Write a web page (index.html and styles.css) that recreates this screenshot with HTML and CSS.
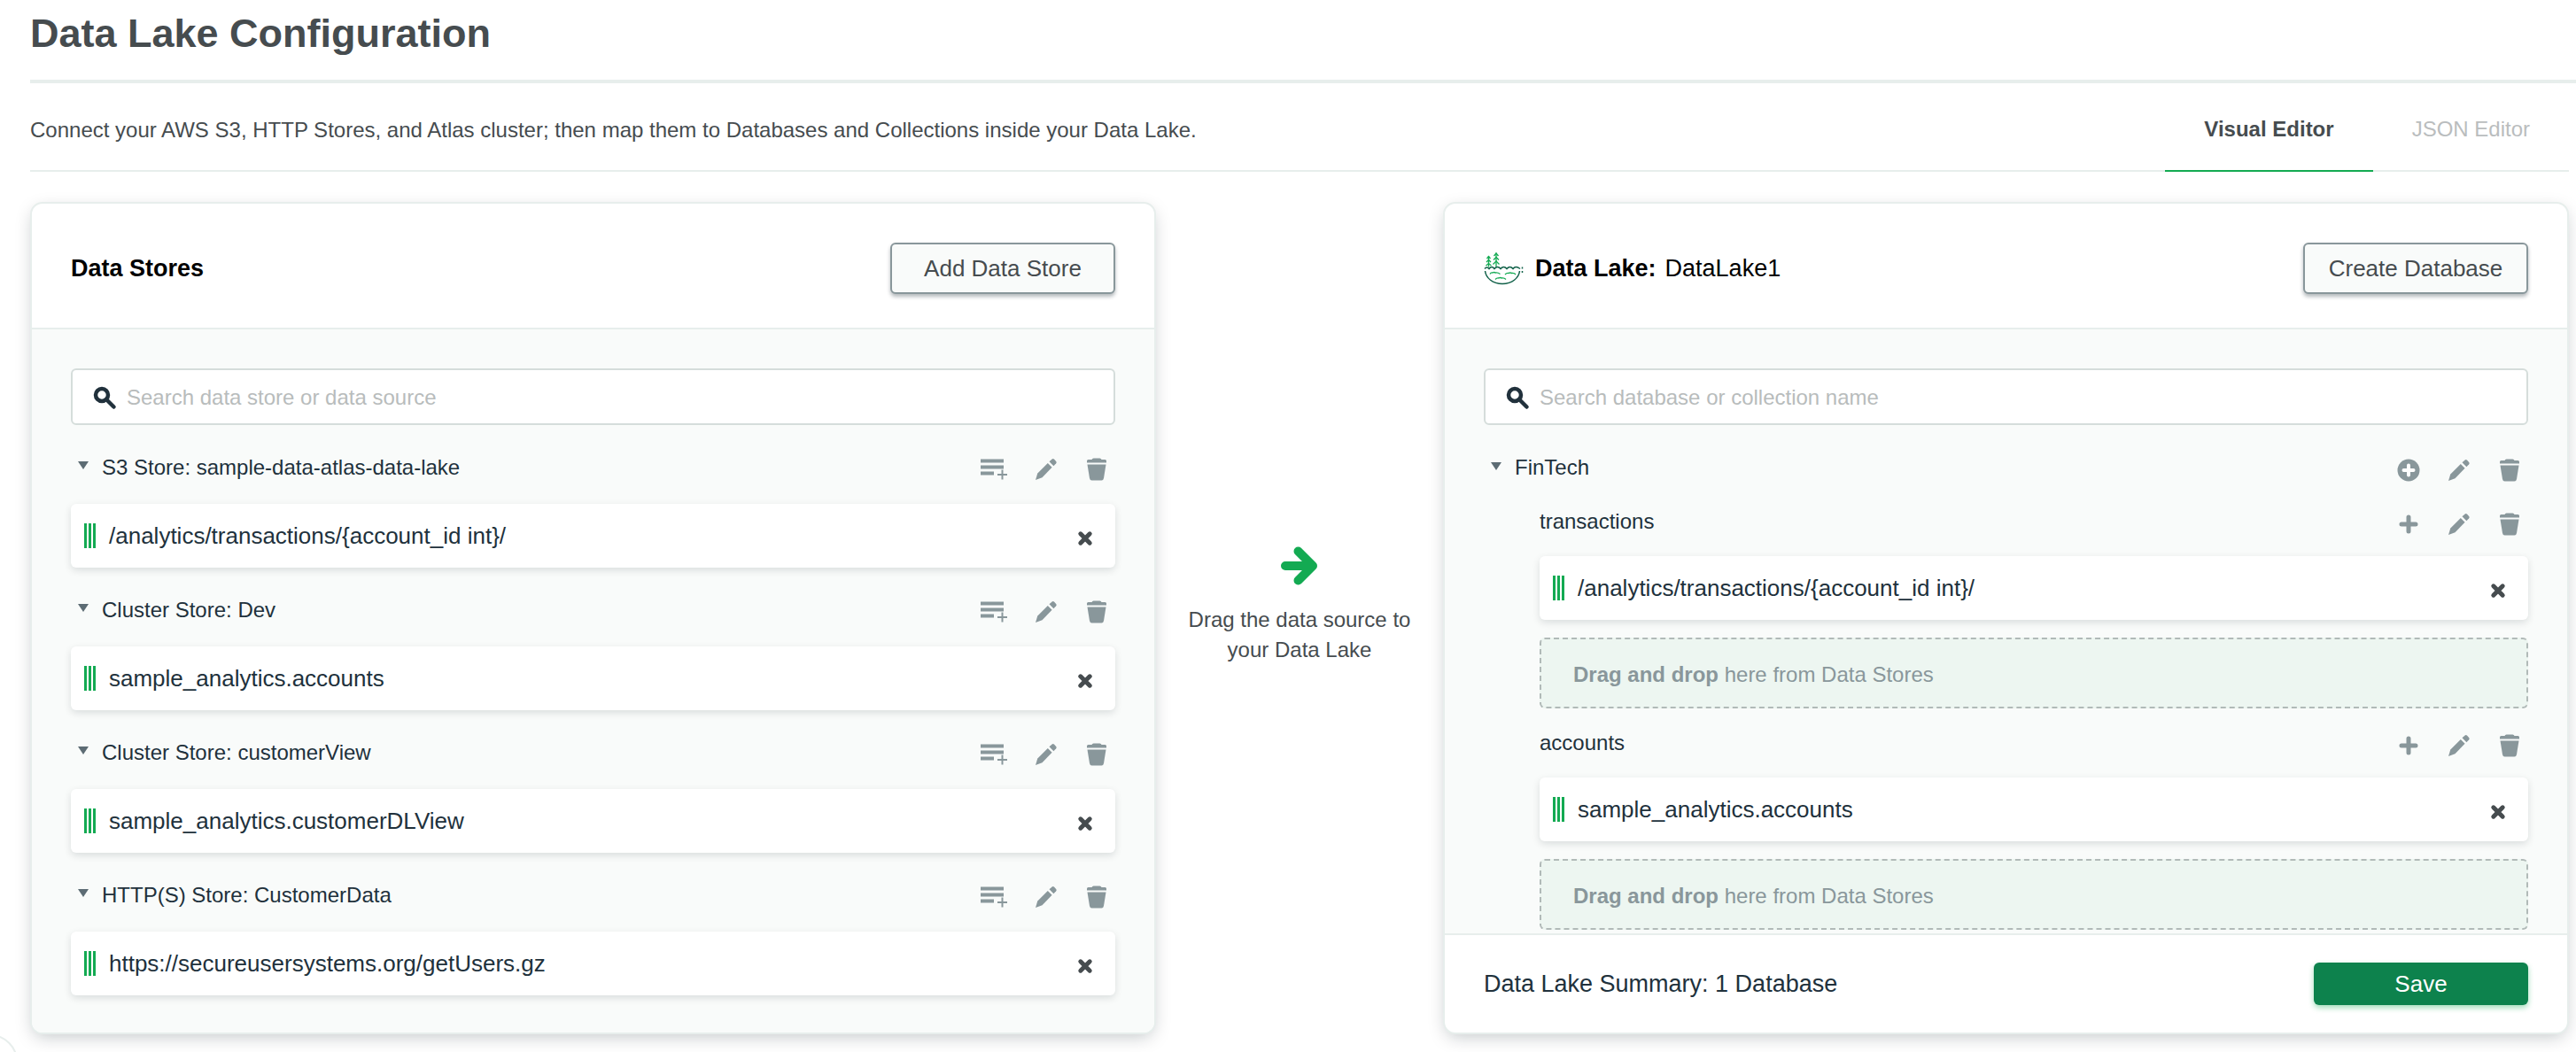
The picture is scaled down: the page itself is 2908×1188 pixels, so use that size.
FILE: index.html
```html
<!DOCTYPE html>
<html lang="en">
<head>
    <meta charset="UTF-8">
    <meta name="viewport" content="width=device-width, initial-scale=1.0">
    <title>Data Lake Configuration</title>
    <link rel="stylesheet" href="styles.css">
</head>
<body>
    <!-- icon sprite -->
    <svg class="sprite" aria-hidden="true">
        <symbol id="icon-search" viewBox="0 0 28 28">
            <circle cx="11" cy="11" r="7" fill="none" stroke="currentColor" stroke-width="4.500"/>
            <path d="M16 16l8.500 8.500" stroke="currentColor" stroke-width="4.500" stroke-linecap="round"/>
        </symbol>
        <symbol id="icon-list" viewBox="0 0 32 28">
            <path d="M1 4.500h26M1 11.500h26M1 18.500h15" stroke="currentColor" stroke-width="4"/>
            <path d="M20 20h11M25.500 14.500v11" stroke="currentColor" stroke-width="2"/>
        </symbol>
        <symbol id="icon-edit" viewBox="0 0 28 28">
            <path d="M2 26l2.300-7.500L15.800 7l4.800 4.800L9.500 23.300z" fill="currentColor"/>
            <path d="M17.500 5.300L20.600 2.500q1.200-.9 2.300.1l2.300 2.300q1 1.200 0 2.300l-2.800 3z" fill="currentColor"/>
        </symbol>
        <symbol id="icon-trash" viewBox="0 0 28 28">
            <path d="M3 6.500V4.500Q3 3 4.500 3H8.500Q9 1.500 10.500 1.500h7Q19 1.500 19.500 3h4Q25 3 25 4.500v2z" fill="currentColor"/>
            <path d="M3.500 8.500h21l-2.500 15.500q-.5 2.500-2.500 2.500h-11q-2 0-2.500-2.500z" fill="currentColor"/>
        </symbol>
        <symbol id="icon-add" viewBox="0 0 28 28">
            <path d="M14 6v16M6 14h16" stroke="currentColor" stroke-width="5" stroke-linecap="round"/>
        </symbol>
        <symbol id="icon-add-circle" viewBox="0 0 28 28">
            <circle cx="14" cy="14" r="12.500" fill="currentColor"/>
            <path d="M14 8.500v11M8.500 14h11" stroke="#fff" stroke-width="4" stroke-linecap="round"/>
        </symbol>
        <symbol id="icon-close" viewBox="0 0 28 28">
            <path d="M8.800 8.800l10.400 10.400M19.200 8.800L8.800 19.200" stroke="currentColor" stroke-width="5" stroke-linecap="round"/>
        </symbol>
    </svg>

    <header class="page-header">
        <h1>Data Lake Configuration</h1>
    </header>

    <div class="toolbar">
        <p>Connect your AWS S3, HTTP Stores, and Atlas cluster; then map them to Databases and Collections inside your Data Lake.</p>
        <nav class="tabs">
            <a href="#visual" class="tab active">Visual Editor</a>
            <a href="#json" class="tab">JSON Editor</a>
        </nav>
    </div>

    <main class="editor">
        <section class="panel">
            <div class="panel-header">
                <h2>Data Stores</h2>
                <button class="btn">Add Data Store</button>
            </div>
            <div class="panel-body">
                <label class="search">
                    <svg class="icon"><use href="#icon-search"/></svg>
                    <input type="text" placeholder="Search data store or data source" aria-label="Search data stores">
                </label>

                <div class="group-header">
                    <span class="caret"></span>
                    <h3>S3 Store: sample-data-atlas-data-lake</h3>
                    <div class="actions">
                        <button aria-label="Add source"><svg class="icon icon-wide"><use href="#icon-list"/></svg></button>
                        <button aria-label="Edit"><svg class="icon"><use href="#icon-edit"/></svg></button>
                        <button aria-label="Delete"><svg class="icon"><use href="#icon-trash"/></svg></button>
                    </div>
                </div>
                <div class="item">
                    <span class="grip"></span>
                    <span class="item-name">/analytics/transactions/{account_id int}/</span>
                    <button aria-label="Remove"><svg class="icon"><use href="#icon-close"/></svg></button>
                </div>

                <div class="group-header">
                    <span class="caret"></span>
                    <h3>Cluster Store: Dev</h3>
                    <div class="actions">
                        <button aria-label="Add source"><svg class="icon icon-wide"><use href="#icon-list"/></svg></button>
                        <button aria-label="Edit"><svg class="icon"><use href="#icon-edit"/></svg></button>
                        <button aria-label="Delete"><svg class="icon"><use href="#icon-trash"/></svg></button>
                    </div>
                </div>
                <div class="item">
                    <span class="grip"></span>
                    <span class="item-name">sample_analytics.accounts</span>
                    <button aria-label="Remove"><svg class="icon"><use href="#icon-close"/></svg></button>
                </div>

                <div class="group-header">
                    <span class="caret"></span>
                    <h3>Cluster Store: customerView</h3>
                    <div class="actions">
                        <button aria-label="Add source"><svg class="icon icon-wide"><use href="#icon-list"/></svg></button>
                        <button aria-label="Edit"><svg class="icon"><use href="#icon-edit"/></svg></button>
                        <button aria-label="Delete"><svg class="icon"><use href="#icon-trash"/></svg></button>
                    </div>
                </div>
                <div class="item">
                    <span class="grip"></span>
                    <span class="item-name">sample_analytics.customerDLView</span>
                    <button aria-label="Remove"><svg class="icon"><use href="#icon-close"/></svg></button>
                </div>

                <div class="group-header">
                    <span class="caret"></span>
                    <h3>HTTP(S) Store: CustomerData</h3>
                    <div class="actions">
                        <button aria-label="Add source"><svg class="icon icon-wide"><use href="#icon-list"/></svg></button>
                        <button aria-label="Edit"><svg class="icon"><use href="#icon-edit"/></svg></button>
                        <button aria-label="Delete"><svg class="icon"><use href="#icon-trash"/></svg></button>
                    </div>
                </div>
                <div class="item">
                    <span class="grip"></span>
                    <span class="item-name">https://secureusersystems.org/getUsers.gz</span>
                    <button aria-label="Remove"><svg class="icon"><use href="#icon-close"/></svg></button>
                </div>
            </div>
        </section>

        <div class="hint">
            <svg class="arrow" viewBox="0 0 44 46">
                <path d="M6 23h28M20.500 6.500L37 23 20.500 39.500" fill="none" stroke="currentColor" stroke-width="10" stroke-linecap="round" stroke-linejoin="round"/>
            </svg>
            <p>Drag the data source to your Data Lake</p>
        </div>

        <section class="panel">
            <div class="panel-header">
                <svg class="lake-icon" viewBox="14 16 46 38" fill="none">
                    <g stroke="#13aa52" stroke-width="1.300">
                        <path d="M19.500 21V33.500M28 17.500v16"/>
                        <path d="M17.500 24l2-2.500 2 2.500M17 28l2.500-2.500L22 28M16.500 32l3-2.500 3 2.500"/>
                        <path d="M25.500 21l2.500-3 2.500 3M25 25.500l3-3 3 3M24.500 30.500l3.500-3.500 3.500 3.500"/>
                        <path d="M21 41.500q1-2 3-1.500 2-1 3 0 3-.5 5.500 1.500M38 42q2-2 4-1.500 2-1 3.500 0 3-.5 4.500 1.500M27 47.500q2-2 4-1.500 2-1 3 0 3-.5 5 1.500"/>
                    </g>
                    <path d="M15 35.500q2.500-3 5 0 3-4 6 0 3.500-4 7 0 3.500-4 7 0 3.500-4 7 0 3-4 8 0M57.500 33.500v2" stroke="#116149" stroke-width="1.500"/>
                    <path d="M15.500 38C16.500 46 24 52.500 35 52.500S53.500 46 54.500 38M57.500 38v2" stroke="#116149" stroke-width="1.500"/>
                </svg>
                <h2>Data Lake:</h2>
                <span class="lake-name">DataLake1</span>
                <button class="btn">Create Database</button>
            </div>
            <div class="panel-body lake-body">
                <label class="search">
                    <svg class="icon"><use href="#icon-search"/></svg>
                    <input type="text" placeholder="Search database or collection name" aria-label="Search databases">
                </label>

                <div class="group-header database">
                    <span class="caret"></span>
                    <h3>FinTech</h3>
                    <div class="actions">
                        <button aria-label="Add collection"><svg class="icon"><use href="#icon-add-circle"/></svg></button>
                        <button aria-label="Edit"><svg class="icon"><use href="#icon-edit"/></svg></button>
                        <button aria-label="Delete"><svg class="icon"><use href="#icon-trash"/></svg></button>
                    </div>
                </div>

                <div class="collection">
                    <div class="group-header">
                        <h3>transactions</h3>
                        <div class="actions">
                            <button aria-label="Add source"><svg class="icon"><use href="#icon-add"/></svg></button>
                            <button aria-label="Edit"><svg class="icon"><use href="#icon-edit"/></svg></button>
                            <button aria-label="Delete"><svg class="icon"><use href="#icon-trash"/></svg></button>
                        </div>
                    </div>
                    <div class="item">
                        <span class="grip"></span>
                        <span class="item-name">/analytics/transactions/{account_id int}/</span>
                        <button aria-label="Remove"><svg class="icon"><use href="#icon-close"/></svg></button>
                    </div>
                    <div class="dropzone"><strong>Drag and drop</strong> here from Data Stores</div>
                </div>

                <div class="collection">
                    <div class="group-header">
                        <h3>accounts</h3>
                        <div class="actions">
                            <button aria-label="Add source"><svg class="icon"><use href="#icon-add"/></svg></button>
                            <button aria-label="Edit"><svg class="icon"><use href="#icon-edit"/></svg></button>
                            <button aria-label="Delete"><svg class="icon"><use href="#icon-trash"/></svg></button>
                        </div>
                    </div>
                    <div class="item">
                        <span class="grip"></span>
                        <span class="item-name">sample_analytics.accounts</span>
                        <button aria-label="Remove"><svg class="icon"><use href="#icon-close"/></svg></button>
                    </div>
                    <div class="dropzone"><strong>Drag and drop</strong> here from Data Stores</div>
                </div>
            </div>
            <div class="panel-footer">
                <span>Data Lake Summary: 1 Database</span>
                <button class="btn-save">Save</button>
            </div>
        </section>
    </main>

    <div class="help-bubble"></div>
</body>
</html>
```

FILE: styles.css
```css
* {
    margin: 0;
    padding: 0;
    box-sizing: border-box;
}

body {
    background: #fff;
    color: #464c4f;
    font-family: "Liberation Sans", Arial, sans-serif;
    font-size: 24px;
    overflow-x: hidden;
}

button {
    font-family: inherit;
    cursor: pointer;
}

.sprite {
    display: none;
}

.icon {
    display: block;
    width: 28px;
    height: 28px;
}

.icon-wide {
    width: 32px;
}

/* page header */
.page-header {
    margin-left: 34px;
    height: 94px;
    padding-top: 12px;
    border-bottom: 4px solid #e7eeec;
}

h1 {
    font-size: 45px;
    line-height: 52px;
}

.toolbar {
    display: flex;
    justify-content: space-between;
    align-items: stretch;
    height: 100px;
    margin: 0 8px 0 34px;
    border-bottom: 2px solid #e7eeec;
}

.toolbar p {
    line-height: 106px;
}

.tabs {
    display: flex;
    margin-bottom: -2px;
}

.tab {
    padding: 0 44px;
    line-height: 104px;
    color: #babdbe;
    text-decoration: none;
}

.tab.active {
    color: #464c4f;
    font-weight: bold;
    border-bottom: 2px solid #13aa52;
}

/* two panels with the hint between them */
.editor {
    display: grid;
    grid-template-columns: 1fr 324px 1fr;
    margin: 34px 8px 20px 34px;
}

.panel {
    display: flex;
    flex-direction: column;
    background: #fff;
    border: 2px solid #e7eeec;
    border-radius: 14px;
    box-shadow: 0 6px 20px -4px rgba(6, 22, 33, 0.25);
    overflow: hidden;
}

.panel-header {
    display: flex;
    align-items: center;
    height: 142px;
    padding: 6px 44px 0;
    border-bottom: 2px solid #e7eeec;
}

h2 {
    font-size: 27px;
    line-height: 32px;
    color: #000;
}

.lake-icon {
    width: 46px;
    height: 38px;
    margin-right: 12px;
}

.lake-name {
    margin-left: 10px;
    font-size: 27px;
    line-height: 32px;
    color: #000;
}

.btn {
    margin-left: auto;
    min-width: 254px;
    height: 58px;
    padding: 0 24px;
    border: 2px solid #89979b;
    border-radius: 6px;
    background: #f9fbfa;
    box-shadow: 0 3px 4px rgba(6, 22, 33, 0.3);
    color: #464c4f;
    font-size: 26px;
}

.panel-body {
    flex: 1;
    padding: 44px 44px 40px;
    background: #f9fbfa;
}

.lake-body {
    padding-bottom: 4px;
}

.search {
    display: flex;
    align-items: center;
    height: 64px;
    padding: 2px 22px 0;
    gap: 11px;
    border: 2px solid #d5dddb;
    border-radius: 6px;
    background: #fff;
    color: #21313c;
}

.search input {
    flex: 1;
    border: none;
    outline: none;
    background: none;
    color: #21313c;
    font-family: inherit;
    font-size: 24px;
}

.search input::placeholder {
    color: #b8bcbc;
}

.group-header {
    display: flex;
    align-items: center;
    height: 89px;
    padding-top: 6px;
}

.caret {
    margin: 0 15px 4px 8px;
    border: 6px solid transparent;
    border-top: 9px solid #5d6c74;
    border-bottom: none;
}

h3 {
    font-size: 24px;
    font-weight: normal;
    line-height: 28px;
    color: #21313c;
}

.actions {
    display: flex;
    align-items: center;
    gap: 29px;
    margin-left: auto;
    padding: 5px 7px 0 0;
}

.actions button,
.item button {
    display: block;
    border: none;
    background: none;
    color: #89979b;
}

.item {
    display: flex;
    align-items: center;
    height: 72px;
    padding: 0 20px 0 15px;
    border-radius: 6px;
    background: #fff;
    box-shadow: 0 3px 8px rgba(6, 22, 33, 0.13);
    color: #21313c;
}

.item-name {
    margin-left: 15px;
    font-size: 26px;
    line-height: 32px;
}

.item button {
    margin-left: auto;
    padding-top: 6px;
    color: #464c4f;
}

.grip {
    width: 13px;
    height: 28px;
    background: repeating-linear-gradient(90deg, #13aa52 0, #13aa52 3px, #fff 3px, #fff 5px);
}

/* databases and collections */
.database {
    height: 70px;
    padding-top: 26px;
}

.collection {
    margin-left: 63px;
}

.collection .group-header {
    height: 78px;
    padding-top: 0;
}

.dropzone {
    height: 80px;
    margin-top: 20px;
    padding: 0 36px;
    border: 2px dashed #b1bab8;
    border-radius: 6px;
    background: #edf6f1;
    color: #89979b;
    line-height: 80px;
}

.panel-footer {
    display: flex;
    align-items: center;
    justify-content: space-between;
    height: 112px;
    padding: 0 44px;
    border-top: 2px solid #e7eeec;
    color: #21313c;
    font-size: 27px;
}

.btn-save {
    width: 242px;
    height: 48px;
    border: none;
    border-radius: 6px;
    background: #0d824d;
    box-shadow: 0 3px 6px rgba(19, 170, 82, 0.4);
    color: #fff;
    font-size: 26px;
}

.hint {
    padding: 388px 24px 0;
    text-align: center;
    line-height: 34px;
}

.arrow {
    display: block;
    width: 44px;
    height: 46px;
    margin: 0 auto 21px;
    color: #13aa52;
}

/* floating bubble in the window corner */
.help-bubble {
    position: fixed;
    left: -42px;
    bottom: -42px;
    width: 62px;
    height: 62px;
    border: 2px solid #e7eeec;
    border-radius: 50%;
    background: #fff;
}
```
